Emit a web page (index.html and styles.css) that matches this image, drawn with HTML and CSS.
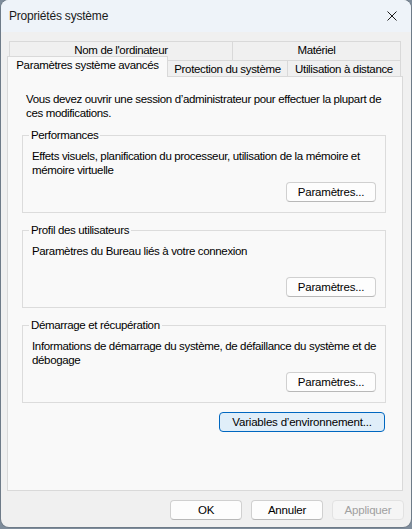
FILE: index.html
```html
<!DOCTYPE html>
<html>

<head>
    <title>Propriétés système</title>
    <meta http-equiv="Content-Type" content="text/html;charset=UTF-8">
    <link rel="stylesheet" href="styles.css">
</head>

<body>
    <div class="window">
        <div class="titlebar">
            <span class="titlebar__title">Propriétés système</span>
            <button class="titlebar__close" aria-label="Fermer">
                <svg width="10" height="10" viewBox="0 0 10 10">
                    <path d="M0.5 0.5 L9.5 9.5 M9.5 0.5 L0.5 9.5" stroke="#1b1b1b" stroke-width="1" fill="none" />
                </svg>
            </button>
        </div>

        <div class="content">
            <div class="tabs">
                <div class="tab-row tab-row--back">
                    <div class="tab tab--computer">Nom de l'ordinateur</div>
                    <div class="tab tab--hardware">Matériel</div>
                </div>
                <div class="tab-row tab-row--front">
                    <div class="tab tab--advanced tab--active">Paramètres système avancés</div>
                    <div class="tab tab--protection">Protection du système</div>
                    <div class="tab tab--remote">Utilisation à distance</div>
                </div>
            </div>

            <div class="panel">
                <p class="notice">Vous devez ouvrir une session d’administrateur pour effectuer la plupart de<br>ces modifications.</p>

                <fieldset class="group">
                    <legend>Performances</legend>
                    <p class="group__text">Effets visuels, planification du processeur, utilisation de la mémoire et<br>mémoire virtuelle</p>
                    <div class="group__actions">
                        <button class="btn">Paramètres...</button>
                    </div>
                </fieldset>

                <fieldset class="group">
                    <legend>Profil des utilisateurs</legend>
                    <p class="group__text">Paramètres du Bureau liés à votre connexion</p>
                    <div class="group__actions">
                        <button class="btn">Paramètres...</button>
                    </div>
                </fieldset>

                <fieldset class="group group--last">
                    <legend>Démarrage et récupération</legend>
                    <p class="group__text">Informations de démarrage du système, de défaillance du système et de<br>débogage</p>
                    <div class="group__actions">
                        <button class="btn">Paramètres...</button>
                    </div>
                </fieldset>

                <div class="panel__actions">
                    <button class="btn btn--env">Variables d’environnement...</button>
                </div>
            </div>
        </div>

        <div class="footer">
            <button class="btn btn--dialog">OK</button>
            <button class="btn btn--dialog">Annuler</button>
            <button class="btn btn--dialog" disabled>Appliquer</button>
        </div>
    </div>
</body>

</html>
```

FILE: styles.css
```css
* {
    box-sizing: border-box;
}

body {
    margin: 0;
    height: 529px;
    overflow: hidden;
    background-color: #7e8c9b;
    font-family: "Liberation Sans", Arial, sans-serif;
    font-size: 11.5px;
    letter-spacing: -0.35px;
    color: #000;
}

.window {
    display: flex;
    flex-direction: column;
    width: 410px;
    height: 527px;
    margin-left: 1px;
    border-radius: 8px;
    overflow: hidden;
    background-color: #f0f0f0;
    box-shadow: 0 0 0 1px rgba(0, 0, 0, 0.12);
}

/* title bar */

.titlebar {
    display: flex;
    align-items: center;
    justify-content: space-between;
    height: 32px;
    padding: 0 8px 1px 8px;
    background-color: #eef3f9;
}

.titlebar__title {
    font-size: 12px;
    letter-spacing: -0.2px;
    color: #1a1a1a;
}

.titlebar__close {
    display: flex;
    padding: 0;
    margin-right: 6px;
    border: none;
    background: none;
}

/* tabs */

.content {
    padding: 9px 0 0 6px;
}

.tab-row {
    display: flex;
}

.tab {
    text-align: center;
    white-space: nowrap;
    border: 1px solid #d9d9d9;
    border-bottom: none;
    background-color: #f0f0f0;
}

.tab-row--back {
    height: 19px;
    margin-left: 2px;
}

.tab-row--back .tab {
    line-height: 17px;
}

.tab--computer {
    width: 224px;
}

.tab--hardware {
    width: 168px;
    border-left: none;
}

.tab-row--front {
    align-items: flex-end;
    height: 16px;
}

.tab-row--front .tab {
    height: 16px;
    line-height: 16px;
}

.tab--advanced {
    width: 161px;
}

.tab--protection {
    width: 120px;
    border-left: none;
}

.tab--remote {
    width: 113px;
    border-left: none;
}

.tab-row--front .tab--active {
    position: relative;
    z-index: 1;
    height: 21px;
    margin-bottom: -1px;
    line-height: 17px;
    background-color: #f9f9f9;
    border-right: 1px solid #d9d9d9;
}

.tab--active + .tab {
    border-left: none;
}

/* panel */

.panel {
    width: 396px;
    height: 415px;
    padding: 15px 16px 0 18px;
    border: 1px solid #d9d9d9;
    background-color: #f9f9f9;
}

.notice {
    margin: 0 0 8px 0;
    line-height: 14px;
    white-space: nowrap;
}

.group {
    margin: 0 0 10px -4px;
    padding: 7px 9px 10px 9px;
    border: 1px solid #dcdcdc;
    min-width: 0;
}

.group--last {
    margin-bottom: 9px;
}

.group legend {
    margin-left: -3px;
    padding: 0 2px;
    line-height: 14px;
}

.group__text {
    margin: 0;
    min-height: 28px;
    line-height: 14px;
    white-space: nowrap;
}

.group__actions {
    display: flex;
    justify-content: flex-end;
    margin-top: 5px;
}

.panel__actions {
    display: flex;
    justify-content: flex-end;
    margin-right: 1px;
}

/* buttons */

.btn {
    height: 20px;
    padding: 0;
    font-family: inherit;
    font-size: 11.5px;
    letter-spacing: -0.2px;
    color: #000;
    background-color: #fdfdfd;
    border: 1px solid #d0d0d0;
    border-bottom-color: #b8b8b8;
    border-radius: 4px;
}

.group .btn {
    width: 90px;
}

.btn--env {
    width: 166px;
    background-color: #e0eef9;
    border: 1px solid #0067c0;
}

.footer {
    display: flex;
    justify-content: flex-end;
    gap: 9px;
    padding: 9px 7px 0 0;
}

.btn--dialog {
    width: 72px;
}

.btn--dialog:disabled {
    color: #a0a0a0;
    background-color: #f5f5f5;
    border-color: #e2e2e2;
}
```
